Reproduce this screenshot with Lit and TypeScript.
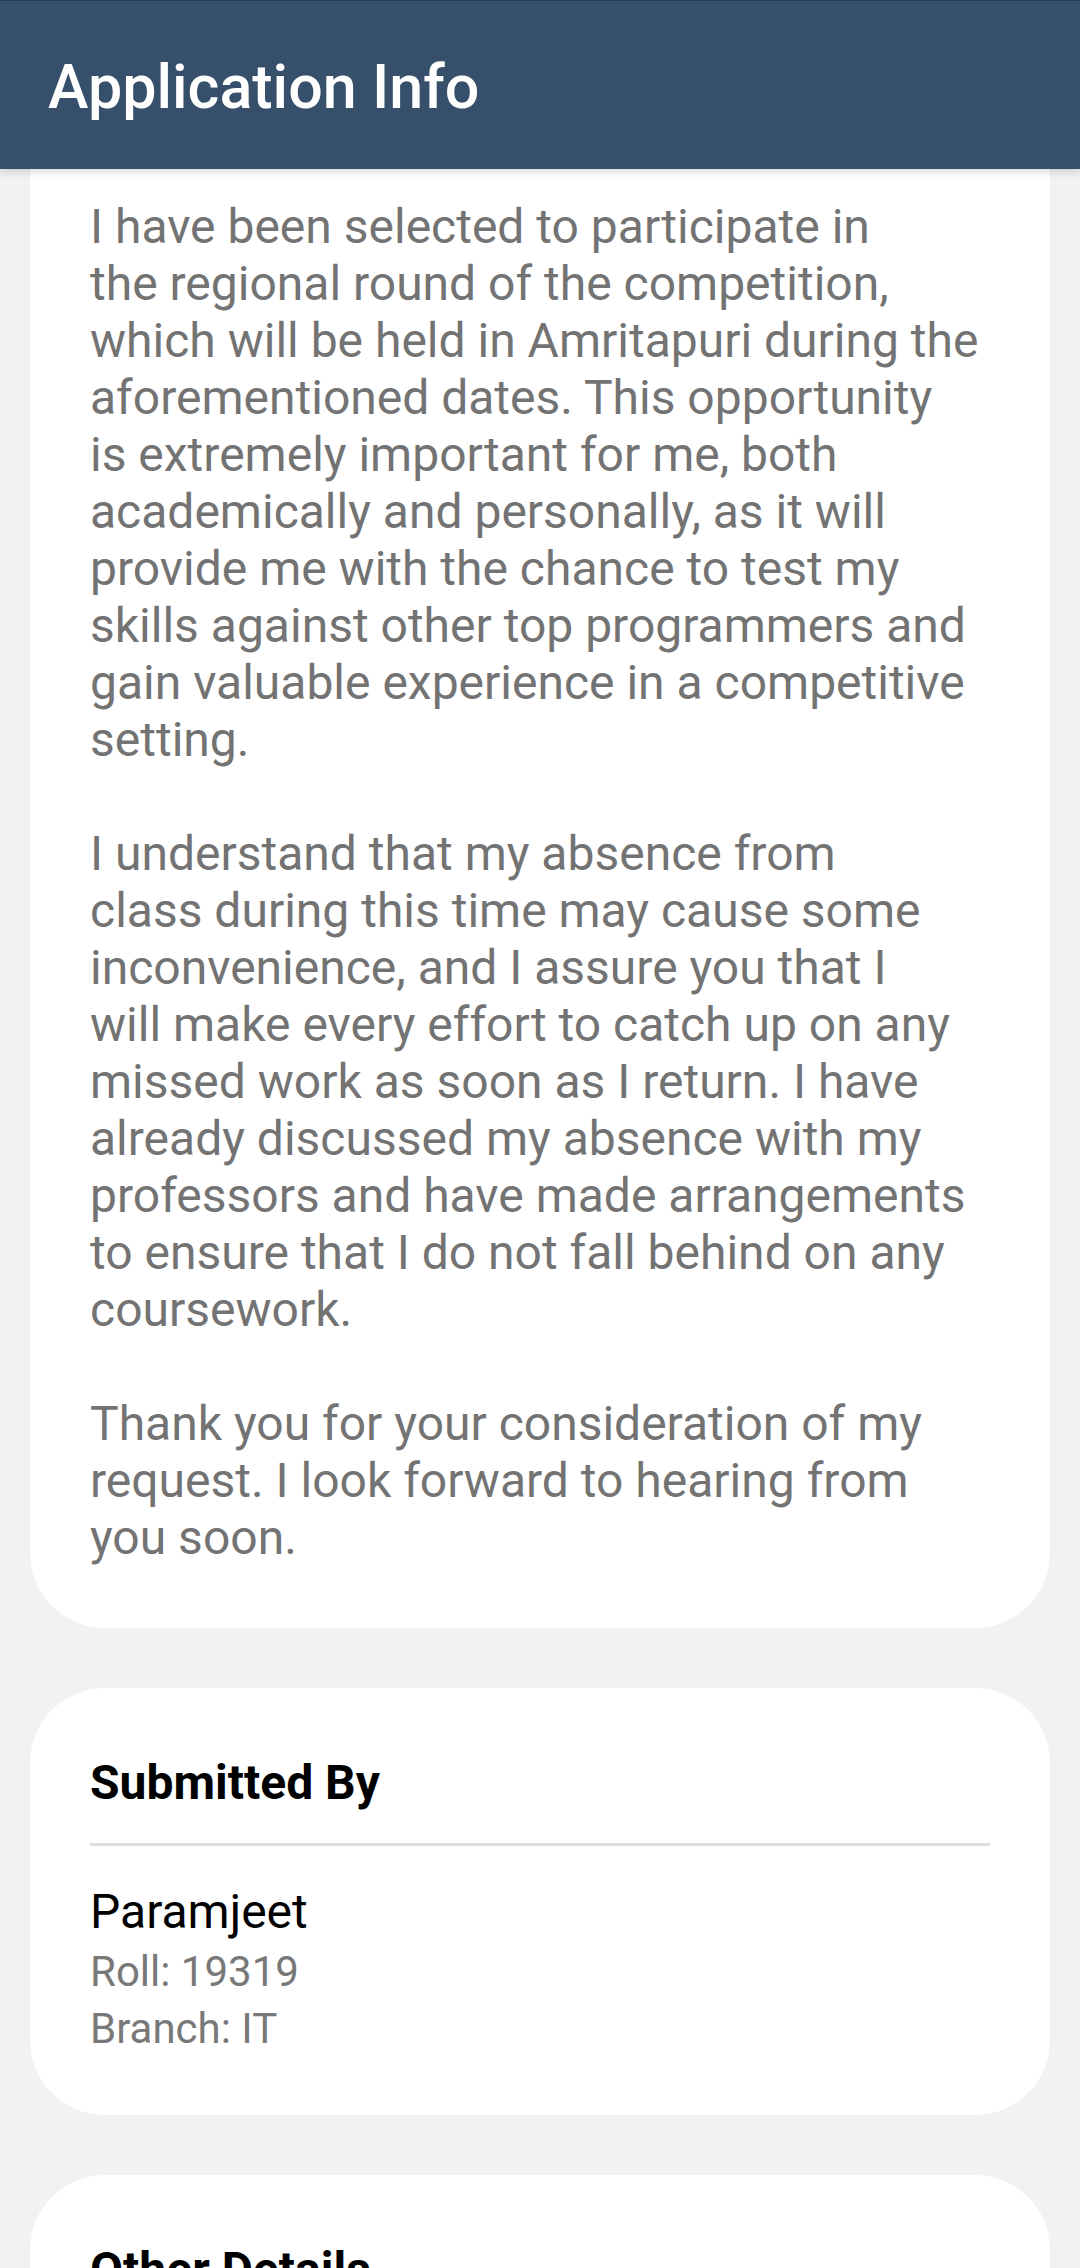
import { LitElement, html, css } from "lit";
import { customElement } from "lit/decorators.js";

const LETTER: string[][] = [
  [
    "I have been selected to participate in",
    "the regional round of the competition,",
    "which will be held in Amritapuri during the",
    "aforementioned dates. This opportunity",
    "is extremely important for me, both",
    "academically and personally, as it will",
    "provide me with the chance to test my",
    "skills against other top programmers and",
    "gain valuable experience in a competitive",
    "setting.",
  ],
  [
    "I understand that my absence from",
    "class during this time may cause some",
    "inconvenience, and I assure you that I",
    "will make every effort to catch up on any",
    "missed work as soon as I return. I have",
    "already discussed my absence with my",
    "professors and have made arrangements",
    "to ensure that I do not fall behind on any",
    "coursework.",
  ],
  [
    "Thank you for your consideration of my",
    "request. I look forward to hearing from",
    "you soon.",
  ],
];

@customElement("app-root")
export class AppRoot extends LitElement {
  static styles = css`
    :host {
      display: flex;
      flex-direction: column;
      height: 100vh;
      overflow: hidden;
      background: #f2f2f2;
      color: #000;
      font-family: Roboto, "Liberation Sans", sans-serif;
    }
    h1,
    h2,
    p {
      margin: 0;
    }
    .bar {
      flex: none;
      padding: 51px 48px 47px;
      border-top: 1px solid #223d5c;
      background: #364f6b;
      color: #fff;
      box-shadow: 0 2px 9px rgba(0, 0, 0, 0.18);
      z-index: 1;
    }
    .title {
      font-size: 61px;
      line-height: 70px;
      font-weight: 500;
    }
    .content {
      flex: 1;
      min-height: 0;
      overflow: hidden;
      display: flex;
      flex-direction: column;
      gap: 60px;
      padding: 0 30px;
    }
    .card {
      flex: none;
      padding: 60px 60px 58px;
      border-radius: 75px;
      background: #fff;
    }
    .letter {
      display: flex;
      flex-direction: column;
      gap: 57px;
      padding: 29px 60px 62px;
      border-top-left-radius: 0;
      border-top-right-radius: 0;
      color: #737373;
      font-size: 48px;
      line-height: 57px;
      white-space: pre-line;
    }
    .heading {
      padding-bottom: 25px;
      border-bottom: 3px solid #dedede;
      font-size: 48px;
      line-height: 70px;
      font-weight: 700;
    }
    .name {
      margin-top: 35px;
      font-size: 48px;
      line-height: 62px;
    }
    .meta {
      color: #787878;
      font-size: 42px;
      line-height: 57px;
    }
  `;

  render() {
    return html`
      <header class="bar"><h1 class="title">Application Info</h1></header>
      <main class="content">
        <article class="card letter">
          ${LETTER.map((lines) => html`<p>${lines.join("\n")}</p>`)}
        </article>
        <section class="card">
          <h2 class="heading">Submitted By</h2>
          <p class="name">Paramjeet</p>
          <p class="meta">Roll: 19319</p>
          <p class="meta">Branch: IT</p>
        </section>
        <section class="card">
          <h2 class="heading">Other Details</h2>
        </section>
      </main>
    `;
  }
}
